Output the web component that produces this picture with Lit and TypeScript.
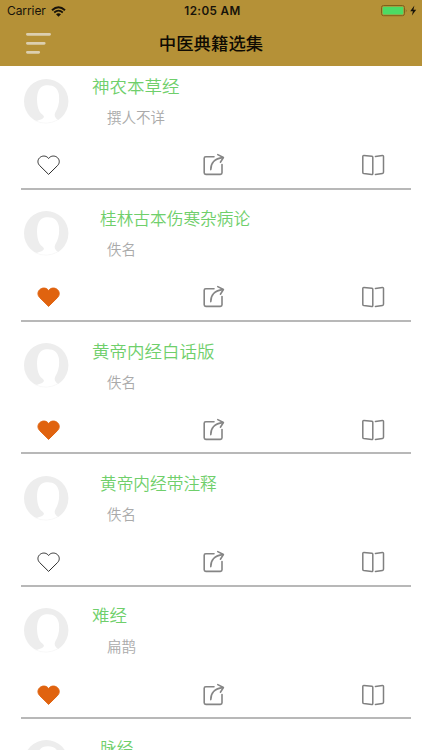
import { LitElement, html, css, svg } from "lit";
import { customElement, property } from "lit/decorators.js";

interface Book {
  title: string;
  author: string;
  liked: boolean;
}

const BOOKS: Book[] = [
  { title: "神农本草经", author: "撰人不详", liked: false },
  { title: "桂林古本伤寒杂病论", author: "佚名", liked: true },
  { title: "黄帝内经白话版", author: "佚名", liked: true },
  { title: "黄帝内经带注释", author: "佚名", liked: false },
  { title: "难经", author: "扁鹊", liked: true },
  { title: "脉经", author: "", liked: false },
];

@customElement("status-bar")
export class StatusBar extends LitElement {
  static styles = css`
    :host {
      display: grid;
      grid-template-columns: 1fr auto 1fr;
      align-items: center;
      height: 22px;
      padding: 0 5px 0 7px;
      font: 12px/22px Inter, "Liberation Sans", sans-serif;
      color: #17130a;
    }
    .left, .right { display: flex; align-items: center; }
    .left { gap: 5px; }
    .carrier { letter-spacing: -0.08px; }
    .time { font-size: 11.7px; font-weight: 600; letter-spacing: 0.38px; padding-left: 1px; }
    .right { justify-content: flex-end; }
    svg { display: block; }
  `;

  render() {
    return html`
      <div class="left">
        <span class="carrier">Carrier</span>
        <svg width="15" height="11" viewBox="0 0 15 11" fill="none" stroke="#17130a">
          <path d="M1 4.2Q7.5 -1.8 14 4.2" stroke-width="1.9" />
          <path d="M3.2 6.5Q7.5 2.6 11.8 6.5" stroke-width="1.7" />
          <path d="M5 8.2Q7.5 6.2 10 8.2L7.5 10.7Z" fill="#17130a" stroke="none" />
        </svg>
      </div>
      <span class="time">12:05 AM</span>
      <div class="right">
        <svg width="37" height="12" viewBox="0 0 37 12">
          <rect x="1.5" y="0.5" width="23" height="10.2" rx="2" fill="none" stroke="#80601c" />
          <rect x="2.7" y="1.7" width="20.6" height="7.8" rx="1" fill="#4cdb64" />
          <path d="M25.8 3.9Q27.4 5.6 25.8 7.4Z" fill="#80601c" />
          <path d="M34.4 0.6L30.2 6.3H32.9L31.9 10.6L36.2 4.8H33.4Z" fill="#17130a" />
        </svg>
      </div>
    `;
  }
}

@customElement("book-row")
export class BookRow extends LitElement {
  static styles = css`
    :host { display: block; height: 132.4px; }
    .card {
      box-sizing: border-box;
      height: 124px;
      margin: 0 11px 0 21px;
      border-bottom: 2px solid #b8b8b8;
    }
    .info { display: flex; height: 80.5px; padding: 13px 0 0 2.5px; box-sizing: border-box; }
    .avatar { flex: none; width: 45px; height: 45px; }
    .text { padding-left: 23.5px; margin-top: -3.7px; white-space: nowrap; }
    .title {
      font: 350 17.5px/22px "Noto Sans CJK SC", sans-serif;
      color: #6fcf6b;
    }
    .title.compact { font-size: 16.7px; padding-left: 8px; }
    .author {
      font: 350 14.5px/20px "Noto Sans CJK SC", sans-serif;
      color: #aaa;
      padding-left: 15px;
      margin-top: 10px;
    }
    .actions {
      display: flex;
      justify-content: space-between;
      align-items: center;
      height: 38px;
      padding: 0 26px 0 15px;
    }
    .share { margin-left: 3.4px; }
    svg { display: block; }
  `;

  @property({ attribute: false }) book!: Book;
  @property({ type: Boolean }) compact = false;

  render() {
    const { title, author, liked } = this.book;
    const heart = svg`<path
      d="M12.6 21.4L3.6 12.5C1.4 10.2 1.4 6.9 3.6 4.8C5.9 2.5 9.5 2.6 11.6 4.4L12.6 5.5L13.6 4.4C15.7 2.6 19.3 2.5 21.6 4.8C23.8 6.9 23.8 10.2 21.6 12.5Z"
      fill=${liked ? "#e0630f" : "none"}
      stroke=${liked ? "#e0630f" : "#2c2c2c"}
      stroke-width="1" stroke-linejoin="round" />`;
    return html`
      <div class="card">
        <div class="info">
          <svg class="avatar" viewBox="0 0 45 45">
            <circle cx="22.2" cy="22.3" r="22.2" fill="#ededed" />
            <path
              d="M10.5 43C12.5 41.3 18.5 41.2 19.8 38.3C20.5 36 17 35.5 15.3 32C12.8 27 12.4 18 14 13.3C15.6 8 19 6.2 24 6.2C30 6.2 33.8 9 34.8 15C35.8 22 34.6 28 31.3 33.5C29.7 36.7 31.2 39 34.6 41.4C29 45.8 17 46.2 10.5 43Z"
              fill="#fff" />
            <path d="M11 41.6Q22 47 33.6 41" fill="none" stroke="#f6f6f6" stroke-width="0.8" />
          </svg>
          <div class="text">
            <div class="title ${this.compact ? "compact" : ""}">${title}</div>
            <div class="author">${author}</div>
          </div>
        </div>
        <div class="actions">
          <svg width="25" height="24" viewBox="0 0 25 24">${heart}</svg>
          <svg class="share" width="24" height="24" viewBox="0 0 24 24" fill="none" stroke="#858585" stroke-width="1.6" stroke-linecap="round" stroke-linejoin="round">
            <path d="M13 3.7H4.8Q3.2 3.7 3.2 5.3V19.8Q3.2 21.4 4.8 21.4H19.4Q21 21.4 21 19.8V11.6" />
            <path d="M9.8 16.6C9.6 10.5 13.5 5.2 21.8 4.6" />
            <path d="M16.8 1.6L22.4 4.5L19.4 9.2" />
          </svg>
          <svg width="24" height="24" viewBox="0 0 24 24" fill="none" stroke="#808080" stroke-width="1.5" stroke-linecap="round" stroke-linejoin="round">
            <path d="M1.8 3.5Q1.8 2.4 2.9 2.5L10.9 3.3Q11.8 3.5 11.8 4.3V20.6Q11.8 21.7 10.7 21.6L2.8 20.6Q1.8 20.4 1.8 19.4Z" />
            <path d="M14.4 3.4L21.4 2.5Q22.5 2.4 22.5 3.5V19.3Q22.5 20.3 21.5 20.4L14.4 21.4" />
          </svg>
        </div>
      </div>
    `;
  }
}

@customElement("app-root")
export class AppRoot extends LitElement {
  static styles = css`
    :host {
      display: block;
      width: 422px;
      height: 750px;
      overflow: hidden;
      background: #fff;
    }
    header { height: 65.5px; background: #b59137; }
    .nav {
      display: grid;
      grid-template-columns: 1fr auto 1fr;
      align-items: center;
      height: 42px;
      padding: 0 26px;
    }
    h1 {
      margin: 0;
      font: 500 17.4px/26px "Noto Sans CJK SC", sans-serif;
      color: #0f0b03;
    }
    svg { display: block; }
  `;

  render() {
    return html`
      <header>
        <status-bar></status-bar>
        <div class="nav">
          <svg width="26" height="22" viewBox="0 0 26 22" stroke="#dccfb0" stroke-width="2.8" stroke-linecap="round">
            <path d="M1.4 2.3H23.6M1.4 11.3H18.2M1.4 20.3H12.7" />
          </svg>
          <h1>中医典籍选集</h1>
        </div>
      </header>
      <main>
        ${BOOKS.map((book, i) => html`<book-row .book=${book} ?compact=${i % 2 === 1}></book-row>`)}
      </main>
    `;
  }
}
